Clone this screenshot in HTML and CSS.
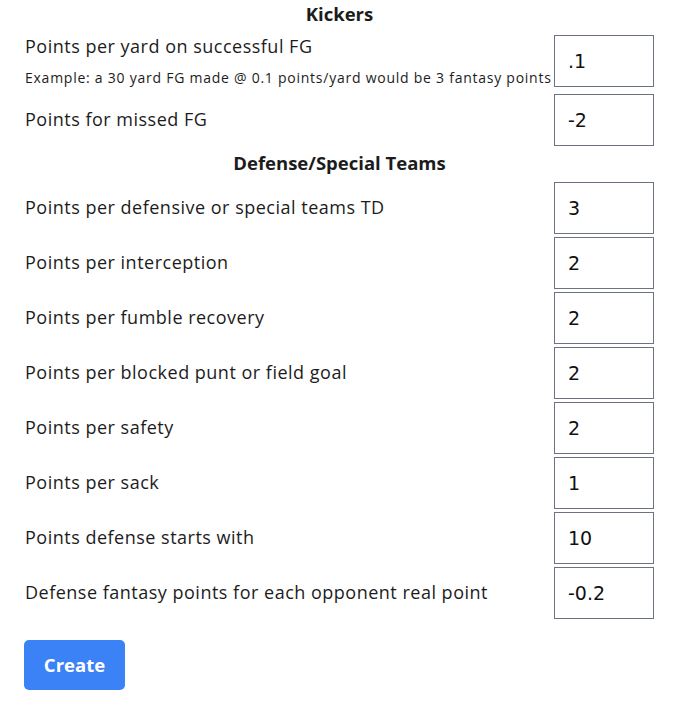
FILE: index.html
```html
<!DOCTYPE html>
<html>
<head>
<meta charset="utf-8">
<link rel="stylesheet" href="styles.css">
</head>
<body>
<form class="form">
  <h3 class="heading h-first">Kickers</h3>
  <div class="row row-tall">
    <div class="label">
      <div>Points per yard on successful FG</div>
      <div class="hint">Example: a 30 yard FG made @ 0.1 points/yard would be 3 fantasy points</div>
    </div>
    <input class="field" value=".1">
  </div>
  <div class="row"><div class="label">Points for missed FG</div><input class="field" value="-2"></div>
  <h3 class="heading h-second">Defense/Special Teams</h3>
  <div class="row"><div class="label">Points per defensive or special teams TD</div><input class="field" value="3"></div>
  <div class="row"><div class="label">Points per interception</div><input class="field" value="2"></div>
  <div class="row"><div class="label">Points per fumble recovery</div><input class="field" value="2"></div>
  <div class="row"><div class="label">Points per blocked punt or field goal</div><input class="field" value="2"></div>
  <div class="row"><div class="label">Points per safety</div><input class="field" value="2"></div>
  <div class="row"><div class="label">Points per sack</div><input class="field" value="1"></div>
  <div class="row"><div class="label">Points defense starts with</div><input class="field" value="10"></div>
  <div class="row"><div class="label">Defense fantasy points for each opponent real point</div><input class="field" value="-0.2"></div>
  <div class="actions"><button type="button" class="btn">Create</button></div>
</form>
</body>
</html>
```
FILE: styles.css
```css
html, body { margin: 0; padding: 0; background: #fff; }
body { font-family: "Open Sans", "Noto Sans", sans-serif; color: #1c1c1c; }
.form {
  width: 629px;
  margin-left: 25px;
  display: flex;
  flex-direction: column;
  gap: 3px;
}
.heading {
  margin: 0;
  text-align: center;
  font-size: 18.5px;
  font-weight: 700;
  display: flex;
  align-items: center;
  justify-content: center;
}
.h-first { height: 27px; margin-bottom: 5px; }
.h-second { height: 30px; padding-bottom: 3px; box-sizing: border-box; }
.row {
  display: flex;
  align-items: center;
  justify-content: space-between;
  min-height: 52px;
}
.row-tall { min-height: 56px; align-items: flex-start; }
.label { font-size: 18px; line-height: 24px; letter-spacing: 0.5px; padding-bottom: 2px; }
.row-tall .label { padding-bottom: 0; margin-top: -1px; }
.hint { font-size: 14px; line-height: 18px; margin-top: 11px; letter-spacing: 0.75px; }
.field {
  box-sizing: border-box;
  width: 100px;
  height: 52px;
  border: 1px solid #6b7280;
  border-radius: 0;
  padding: 0 13px;
  font-family: "DejaVu Sans", sans-serif;
  font-size: 19px;
  color: #111;
  flex: none;
}
.actions { margin-top: 18px; }
.btn {
  background: #3b82f6;
  color: #fff;
  border: none;
  border-radius: 5px;
  width: 101px;
  height: 50px;
  padding-bottom: 3px;
  font-family: "Open Sans", sans-serif;
  font-weight: 700;
  font-size: 18.5px;
  margin-left: -1px;
}
```
